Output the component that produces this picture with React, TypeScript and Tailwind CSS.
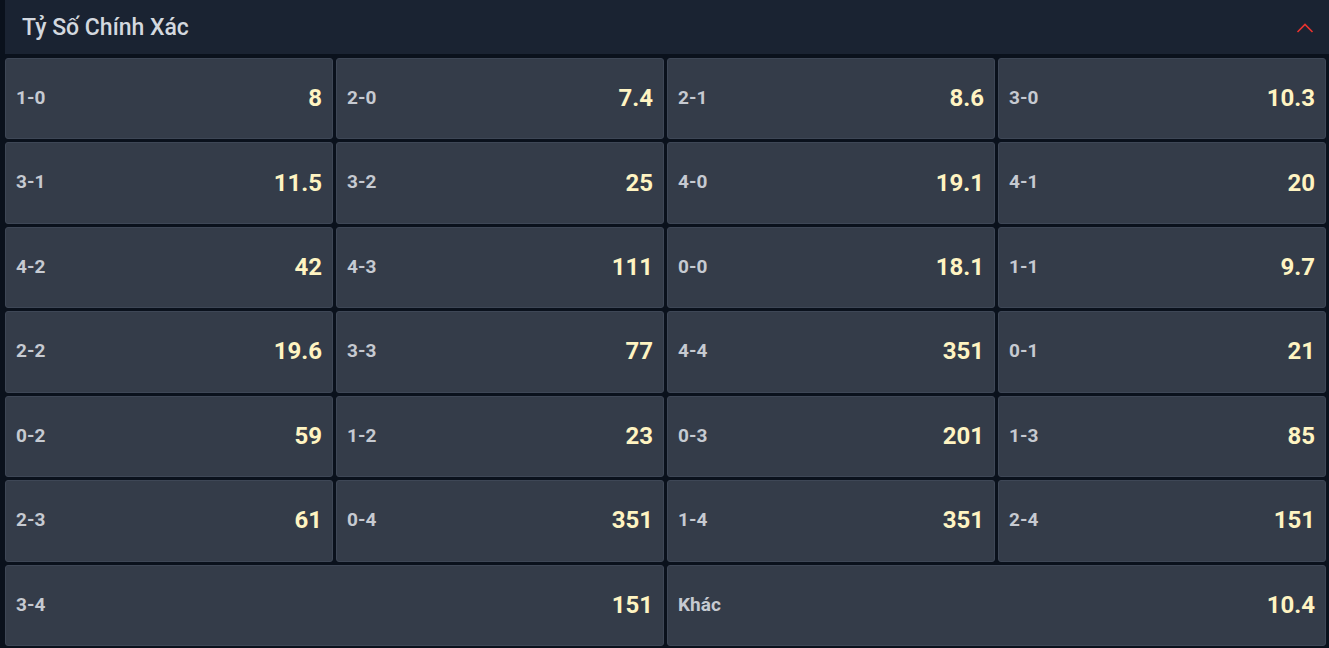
import React from 'react';

interface Odd {
  score: string;
  price: string;
  wide?: boolean;
}

const odds: Odd[] = [
  { score: '1-0', price: '8' },
  { score: '2-0', price: '7.4' },
  { score: '2-1', price: '8.6' },
  { score: '3-0', price: '10.3' },
  { score: '3-1', price: '11.5' },
  { score: '3-2', price: '25' },
  { score: '4-0', price: '19.1' },
  { score: '4-1', price: '20' },
  { score: '4-2', price: '42' },
  { score: '4-3', price: '111' },
  { score: '0-0', price: '18.1' },
  { score: '1-1', price: '9.7' },
  { score: '2-2', price: '19.6' },
  { score: '3-3', price: '77' },
  { score: '4-4', price: '351' },
  { score: '0-1', price: '21' },
  { score: '0-2', price: '59' },
  { score: '1-2', price: '23' },
  { score: '0-3', price: '201' },
  { score: '1-3', price: '85' },
  { score: '2-3', price: '61' },
  { score: '0-4', price: '351' },
  { score: '1-4', price: '351' },
  { score: '2-4', price: '151' },
  { score: '3-4', price: '151', wide: true },
  { score: 'Khác', price: '10.4', wide: true },
];

const OddCell: React.FC<{ odd: Odd }> = ({ odd }) => (
  <div
    className={`flex items-center justify-between rounded-[3px] border border-[#3e4756] bg-[#343c49] pb-[1px] pl-[10px] pr-[10px] ${
      odd.wide ? 'col-span-2' : ''
    }`}
  >
    <span className="text-[19px] font-bold text-[#c6cad1]">{odd.score}</span>
    <span className="text-[24px] font-bold text-[#fff4c2]">{odd.price}</span>
  </div>
);

const App: React.FC = () => {
  return (
    <div
      className="h-[648px] w-[1329px] bg-[#0a111c] pl-[5px]"
      style={{ fontFamily: 'Roboto, "Noto Sans", sans-serif' }}
    >
      <div className="flex h-[54px] items-center justify-between bg-[#1a2332] pl-[17px] pr-[15px]">
        <h2 className="mt-[2px] text-[23px] font-medium text-[#d3d8df]">Tỷ Số Chính Xác</h2>
        <svg width="18" height="12" viewBox="0 0 18 12" fill="none" className="mt-[2px]">
          <path d="M1.5 10 L9 2.5 L16.5 10" stroke="#e8332f" strokeWidth="1.6" />
        </svg>
      </div>
      <div className="mt-[4px] grid h-[588px] w-[1321px] grid-cols-4 grid-rows-7 gap-[3px]">
        {odds.map((odd) => (
          <OddCell key={odd.score} odd={odd} />
        ))}
      </div>
    </div>
  );
};

export default App;
